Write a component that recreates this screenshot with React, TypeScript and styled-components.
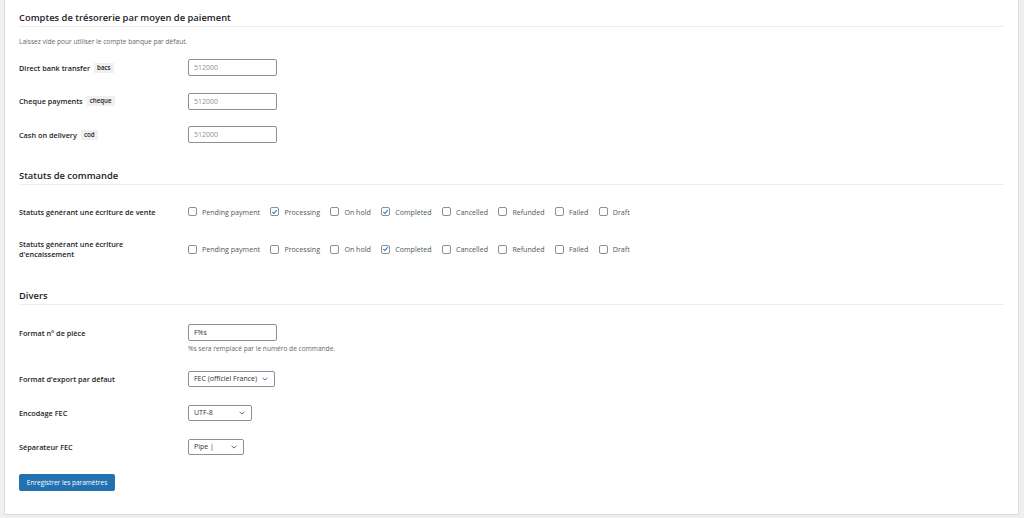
import React from "react";
import styled, { createGlobalStyle } from "styled-components";

const GlobalStyle = createGlobalStyle`
  html, body {
    margin: 0;
    padding: 0;
    background: #f0f0f1;
    font-family: "Open Sans", "Noto Sans", "Liberation Sans", sans-serif;
    color: #1d2327;
  }
  * { box-sizing: border-box; }
`;

const Page = styled.div`
  padding: 0 5px 3px 4px;
`;

const Card = styled.div`
  background: #fff;
  border: 1px solid #dcdcde;
  border-top: none;
  padding: 12px 14px 0;
  min-height: calc(100vh - 3px);
  display: flex;
  flex-direction: column;
`;

const SectionTitle = styled.h2<{ $mt?: number }>`
  margin: ${(p) => p.$mt ?? 0}px 0 0;
  font-size: 9.4px;
  line-height: 12px;
  font-weight: 600;
  padding-bottom: 2px;
  border-bottom: 1px solid #ececec;
  color: #1d2327;
`;

const Description = styled.p`
  margin: 10px 0 0;
  font-size: 6.6px;
  line-height: 10px;
  color: #646970;
`;

const Rows = styled.div<{ $mt: number; $gap: number }>`
  display: flex;
  flex-direction: column;
  margin-top: ${(p) => p.$mt}px;
  gap: ${(p) => p.$gap}px;
`;

const Row = styled.div<{ $top?: boolean }>`
  display: grid;
  grid-template-columns: 169px 1fr;
  align-items: ${(p) => (p.$top ? "start" : "center")};
  min-height: 17px;
`;

const Label = styled.div`
  font-size: 7.3px;
  line-height: 10px;
  font-weight: 600;
  color: #1d2327;
  width: 145px;
  min-height: 17px;
  display: flex;
  align-items: center;
  flex-wrap: wrap;
`;

const Code = styled.code`
  display: inline-block;
  margin-left: 4px;
  padding: 0 3px;
  background: #f0f0f1;
  font-family: "Open Sans", "Noto Sans", sans-serif;
  font-size: 6.2px;
  line-height: 10px;
  font-weight: 600;
  color: #1d2327;
`;

const Control = styled.div`
  display: flex;
  flex-direction: column;
  align-items: flex-start;
`;

const TextInput = styled.input`
  width: 89px;
  height: 17px;
  border: 1px solid #8c8f94;
  border-radius: 2px;
  padding: 0 5px;
  font-family: inherit;
  font-size: 7px;
  color: #2c3338;
  background: #fff;
  outline: none;
  &::placeholder {
    color: #8c8f94;
  }
`;

const Hint = styled.div`
  margin-top: 4px;
  font-size: 6.6px;
  line-height: 8px;
  color: #646970;
`;

const SelectBox = styled.div<{ $w: number }>`
  width: ${(p) => p.$w}px;
  height: 16px;
  border: 1px solid #8c8f94;
  border-radius: 2px;
  padding: 0 6px 0 5px;
  display: flex;
  align-items: center;
  justify-content: space-between;
  font-size: 7px;
  color: #2c3338;
  background: #fff;
`;

const Checks = styled.div`
  display: flex;
  align-items: center;
  gap: 10.4px;
`;

const CheckItem = styled.label`
  display: flex;
  align-items: center;
  gap: 5px;
  font-size: 7.1px;
  line-height: 10px;
  color: #50575e;
`;

const Box = styled.span<{ $on: boolean }>`
  width: 9px;
  height: 9px;
  border: 1px solid #8c8f94;
  border-radius: 2px;
  background: #fff;
  display: flex;
  align-items: center;
  justify-content: center;
`;

const SubmitButton = styled.button`
  margin-top: 19px;
  align-self: flex-start;
  height: 17px;
  width: 96px;
  padding: 0;
  border: 1px solid #2271b1;
  border-radius: 2px;
  background: #2271b1;
  color: #fff;
  font-family: inherit;
  font-size: 6.5px;
  line-height: 15px;
`;

const Chevron = () => (
  <svg width="6" height="4" viewBox="0 0 6 4" fill="none">
    <path d="M0.6 0.8 L3 3.1 L5.4 0.8" stroke="#50575e" strokeWidth="0.9" />
  </svg>
);

const Tick = () => (
  <svg width="8" height="8" viewBox="0 0 8 8" fill="none">
    <path d="M1.6 4.1 L3.3 5.8 L6.5 1.9" stroke="#2271b1" strokeWidth="1.2" />
  </svg>
);

const statuses = [
  "Pending payment",
  "Processing",
  "On hold",
  "Completed",
  "Cancelled",
  "Refunded",
  "Failed",
  "Draft",
];

const StatusChecks = ({ checked }: { checked: string[] }) => (
  <Checks>
    {statuses.map((s) => {
      const on = checked.includes(s);
      return (
        <CheckItem key={s}>
          <Box $on={on}>{on && <Tick />}</Box>
          {s}
        </CheckItem>
      );
    })}
  </Checks>
);

const accounts = [
  { name: "Direct bank transfer", code: "bacs" },
  { name: "Cheque payments", code: "cheque" },
  { name: "Cash on delivery", code: "cod" },
];

export default function App() {
  return (
    <>
      <GlobalStyle />
      <Page>
        <Card>
          <SectionTitle>Comptes de trésorerie par moyen de paiement</SectionTitle>
          <Description>Laissez vide pour utiliser le compte banque par défaut.</Description>
          <Rows $mt={12} $gap={16.5}>
            {accounts.map((a) => (
              <Row key={a.code}>
                <Label>
                  {a.name}
                  <Code>{a.code}</Code>
                </Label>
                <Control>
                  <TextInput placeholder="512000" />
                </Control>
              </Row>
            ))}
          </Rows>

          <SectionTitle $mt={27}>Statuts de commande</SectionTitle>
          <Rows $mt={18} $gap={19}>
            <Row>
              <Label>Statuts générant une écriture de vente</Label>
              <StatusChecks checked={["Processing", "Completed"]} />
            </Row>
            <Row>
              <Label>Statuts générant une écriture d'encaissement</Label>
              <StatusChecks checked={["Completed"]} />
            </Row>
          </Rows>

          <SectionTitle $mt={31}>Divers</SectionTitle>
          <Rows $mt={19} $gap={17}>
            <Row $top>
              <Label>Format n° de pièce</Label>
              <Control>
                <TextInput defaultValue="F%s" />
                <Hint>%s sera remplacé par le numéro de commande.</Hint>
              </Control>
            </Row>
            <Row>
              <Label>Format d'export par défaut</Label>
              <Control>
                <SelectBox $w={87}>
                  FEC (officiel France)
                  <Chevron />
                </SelectBox>
              </Control>
            </Row>
            <Row>
              <Label>Encodage FEC</Label>
              <Control>
                <SelectBox $w={64}>
                  UTF-8
                  <Chevron />
                </SelectBox>
              </Control>
            </Row>
            <Row>
              <Label>Séparateur FEC</Label>
              <Control>
                <SelectBox $w={56}>
                  Pipe |
                  <Chevron />
                </SelectBox>
              </Control>
            </Row>
          </Rows>

          <SubmitButton type="button">Enregistrer les paramètres</SubmitButton>
        </Card>
      </Page>
    </>
  );
}
